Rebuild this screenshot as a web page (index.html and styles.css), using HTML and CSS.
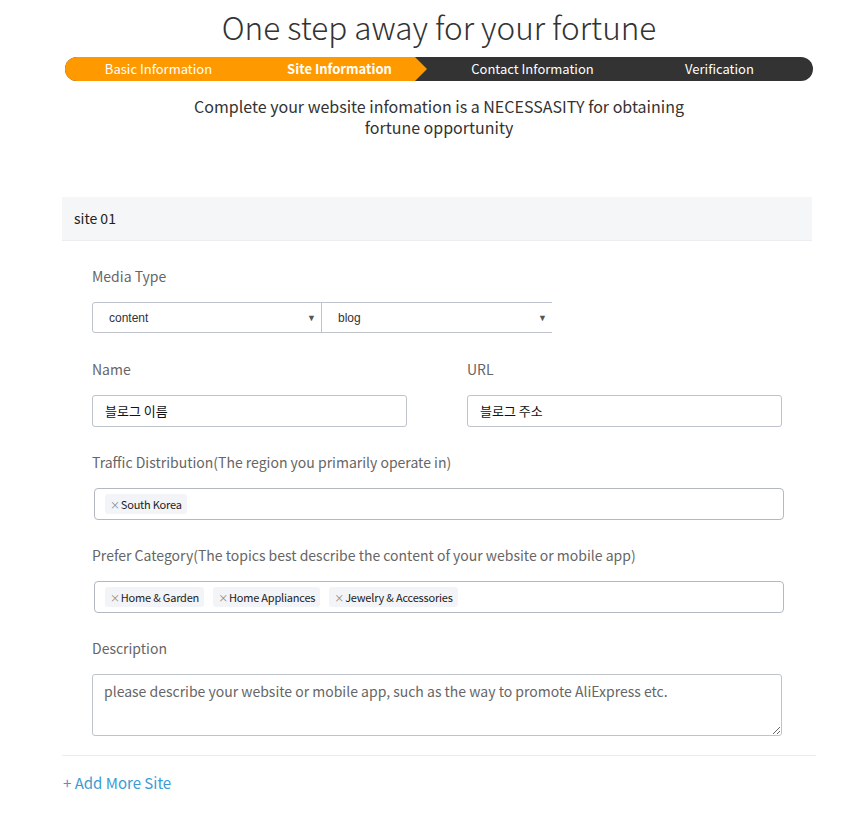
FILE: index.html
```html
<!DOCTYPE html>
<html lang="en">
<head>
<meta charset="utf-8">
<title>One step away for your fortune</title>
<link rel="stylesheet" href="styles.css">
</head>
<body>
<div class="page">
  <h1 class="title">One step away for your fortune</h1>
  <div class="steps">
    <div class="step step-done step-1">Basic Information</div>
    <div class="step step-done step-2 step-active">Site Information</div>
    <div class="step step-3">Contact Information</div>
    <div class="step step-4">Verification</div>
  </div>
  <p class="subtitle">Complete your website infomation is a NECESSASITY for obtaining fortune opportunity</p>

  <div class="site">
    <div class="site-head">site 01</div>
    <div class="site-body">
      <div class="field">
        <div class="label">Media Type</div>
        <div class="selects">
          <div class="select"><span>content</span><span class="caret">▼</span></div>
          <div class="select select-last"><span>blog</span><span class="caret">▼</span></div>
        </div>
      </div>
      <div class="row">
        <div class="field col">
          <div class="label">Name</div>
          <div class="input">블로그 이름</div>
        </div>
        <div class="field col">
          <div class="label">URL</div>
          <div class="input">블로그 주소</div>
        </div>
      </div>
      <div class="field">
        <div class="label">Traffic Distribution(The region you primarily operate in)</div>
        <div class="tagbox">
          <span class="tag"><span class="x">×</span>South Korea</span>
        </div>
      </div>
      <div class="field">
        <div class="label">Prefer Category(The topics best describe the content of your website or mobile app)</div>
        <div class="tagbox">
          <span class="tag"><span class="x">×</span>Home &amp; Garden</span>
          <span class="tag"><span class="x">×</span>Home Appliances</span>
          <span class="tag"><span class="x">×</span>Jewelry &amp; Accessories</span>
        </div>
      </div>
      <div class="field">
        <div class="label">Description</div>
        <textarea class="textarea" placeholder="please describe your website or mobile app, such as the way to promote AliExpress etc."></textarea>
      </div>
    </div>
  </div>
  <div class="divider"></div>
  <a class="add-more" href="#">+ Add More Site</a>
</div>
</body>
</html>
```
FILE: styles.css
```css
* { box-sizing: border-box; }
html, body { margin: 0; padding: 0; background: #fff; }
body {
  font-family: "Noto Sans CJK KR", "Noto Sans", sans-serif;
  color: #333;
}
.page {
  width: 754px;
  margin-left: 62px;
  padding-top: 4px;
}
.title {
  margin: 0;
  text-align: center;
  font-weight: 300;
  font-size: 31.5px;
  line-height: 44px;
  color: #333;
}
.steps {
  display: flex;
  margin: 9px 3px 0 3px;
  width: 748px;
  height: 24px;
  border-radius: 12px;
  overflow: hidden;
  background: #333;
  color: #fff;
  font-size: 13px;
  line-height: 24px;
}
.step { text-align: center; white-space: nowrap; }
.step-1 { width: 187px; background: #ff9900; }
.step-2 {
  width: 175px;
  background: #ff9900;
  clip-path: polygon(0 0, calc(100% - 12px) 0, 100% 50%, calc(100% - 12px) 100%, 0 100%);
}
.step-active { font-weight: 700; }
.step-3 { width: 199px; padding-left: 12px; }
.step-4 { width: 187px; }
.subtitle {
  margin: 15px auto 0;
  width: 500px;
  text-align: center;
  font-size: 16px;
  line-height: 21px;
  color: #333;
}
.site { margin-top: 59px; width: 750px; }
.site-head {
  height: 44px;
  background: #f5f6f8;
  border-bottom: 1px solid #ebedf0;
  padding-left: 12px;
  font-size: 14px;
  line-height: 43px;
  color: #222;
}
.site-body {
  padding: 25px 30px 0 30px;
  display: flex;
  flex-direction: column;
  gap: 25px;
}
.field { display: flex; flex-direction: column; gap: 16px; }
.label { font-size: 14px; line-height: 20px; color: #666; }
.row { display: flex; gap: 60px; margin-top: 1px; }
.col { width: 315px; }
.selects { display: flex; width: 460px; }
.select {
  width: 230px;
  height: 31px;
  border: 1px solid #bfc3cc;
  display: flex;
  align-items: center;
  justify-content: space-between;
  padding: 0 5px 0 16px;
  font-family: "Liberation Sans", Arial, sans-serif;
  font-size: 12px;
  color: #333;
}
.select:first-child { border-radius: 3px 0 0 3px; }
.select-last { border-left: 1px solid #bfc3cc; border-right: none; margin-left: -1px; width: 231px; }
.caret { font-size: 9px; color: #555; }
.input {
  height: 32px;
  border: 1px solid #bfc3cc;
  border-radius: 3px;
  padding: 0 12px;
  font-size: 13px;
  line-height: 30px;
  color: #111;
}
.tagbox {
  margin-left: 2px;
  width: 690px;
  height: 32px;
  border: 1px solid #b4b8c0;
  border-radius: 4px;
  padding: 5px 10px;
  display: flex;
  gap: 9px;
  align-items: flex-start;
}
.tag {
  height: 20px;
  background: #f3f4f7;
  border-radius: 3px;
  padding: 0 5px;
  font-size: 11px;
  letter-spacing: -0.2px;
  line-height: 20px;
  color: #222;
  white-space: nowrap;
}
.tag .x { color: #888; font-size: 10px; margin-right: 1px; }
.textarea {
  display: block;
  width: 690px;
  height: 62px;
  border: 1px solid #bfc3cc;
  border-radius: 3px;
  padding: 6px 11px;
  font-family: "Noto Sans CJK KR", "Noto Sans", sans-serif;
  font-size: 14px;
  line-height: 20px;
  color: #333;
  resize: vertical;
}
.textarea::placeholder { color: #666; opacity: 1; }
.divider {
  margin-top: 19px;
  width: 754px;
  height: 1px;
  background: #ececec;
}
.add-more {
  display: inline-block;
  margin: 17px 0 0 1px;
  font-size: 15px;
  line-height: 20px;
  color: #3c9bd2;
  text-decoration: none;
}
```
